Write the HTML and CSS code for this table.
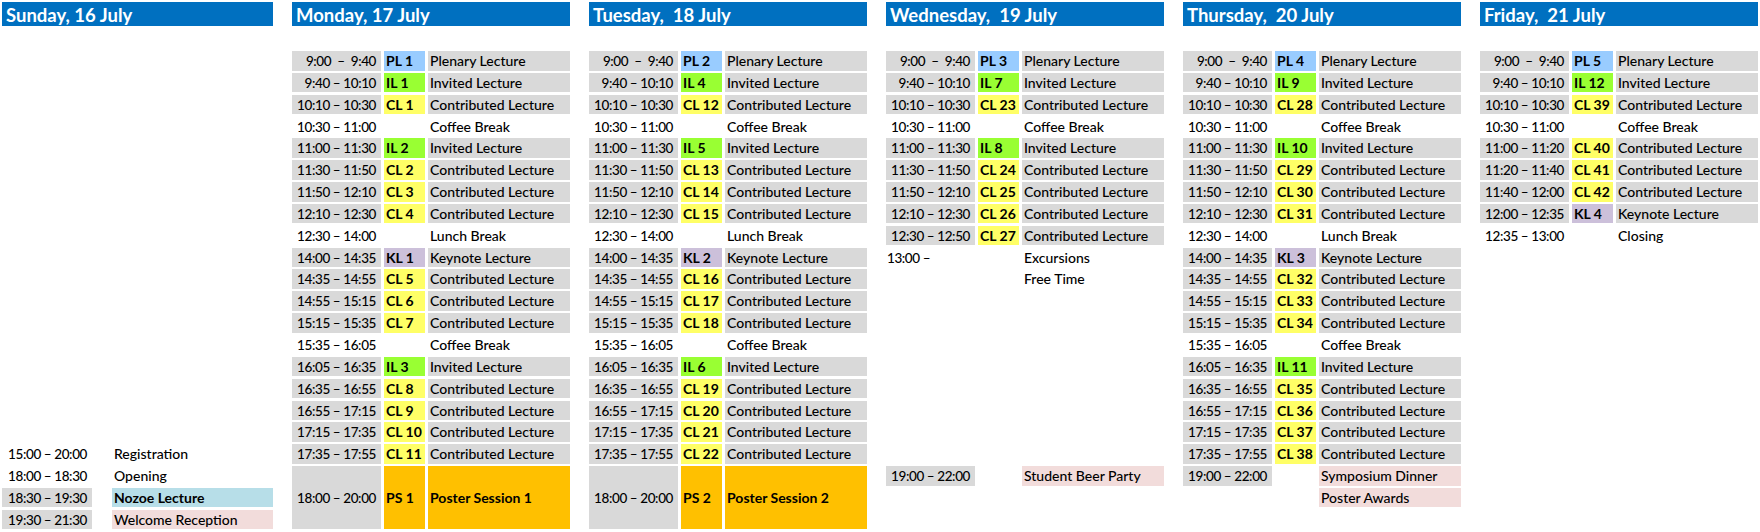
FILE: index.html
```html
<!DOCTYPE html>
<html>
<head>
<meta charset="utf-8">
<link rel="stylesheet" href="styles.css">
</head>
<body>
<div class="page">
  <section class="day sun">
    <h2 class="hd">Sunday, 16 July</h2>
    <div class="grid sgrid">
      <div class="t w r19">15:00 – 20:00</div><div class="c w r19"></div><div class="l w r19">Registration</div>
      <div class="t w r20">18:00 – 18:30</div><div class="c w r20"></div><div class="l w r20">Opening</div>
      <div class="t r21">18:30 – 19:30</div><div class="c w r21"></div><div class="l nz r21">Nozoe Lecture</div>
      <div class="t r22">19:30 – 21:30</div><div class="c w r22"></div><div class="l pink r22">Welcome Reception</div>
    </div>
  </section>

  <section class="day">
    <h2 class="hd">Monday, 17 July</h2>
    <div class="grid">
      <div class="t">9:00  –  9:40</div><div class="c pl">PL 1</div><div class="l">Plenary Lecture</div>
      <div class="t">9:40 – 10:10</div><div class="c il">IL 1</div><div class="l">Invited Lecture</div>
      <div class="t">10:10 – 10:30</div><div class="c cl">CL 1</div><div class="l">Contributed Lecture</div>
      <div class="t w">10:30 – 11:00</div><div class="c w"></div><div class="l w">Coffee Break</div>
      <div class="t">11:00 – 11:30</div><div class="c il">IL 2</div><div class="l">Invited Lecture</div>
      <div class="t">11:30 – 11:50</div><div class="c cl">CL 2</div><div class="l">Contributed Lecture</div>
      <div class="t">11:50 – 12:10</div><div class="c cl">CL 3</div><div class="l">Contributed Lecture</div>
      <div class="t">12:10 – 12:30</div><div class="c cl">CL 4</div><div class="l">Contributed Lecture</div>
      <div class="t w">12:30 – 14:00</div><div class="c w"></div><div class="l w">Lunch Break</div>
      <div class="t">14:00 – 14:35</div><div class="c kl">KL 1</div><div class="l">Keynote Lecture</div>
      <div class="t">14:35 – 14:55</div><div class="c cl">CL 5</div><div class="l">Contributed Lecture</div>
      <div class="t">14:55 – 15:15</div><div class="c cl">CL 6</div><div class="l">Contributed Lecture</div>
      <div class="t">15:15 – 15:35</div><div class="c cl">CL 7</div><div class="l">Contributed Lecture</div>
      <div class="t w">15:35 – 16:05</div><div class="c w"></div><div class="l w">Coffee Break</div>
      <div class="t">16:05 – 16:35</div><div class="c il">IL 3</div><div class="l">Invited Lecture</div>
      <div class="t">16:35 – 16:55</div><div class="c cl">CL 8</div><div class="l">Contributed Lecture</div>
      <div class="t">16:55 – 17:15</div><div class="c cl">CL 9</div><div class="l">Contributed Lecture</div>
      <div class="t">17:15 – 17:35</div><div class="c cl">CL 10</div><div class="l">Contributed Lecture</div>
      <div class="t">17:35 – 17:55</div><div class="c cl">CL 11</div><div class="l">Contributed Lecture</div>
      <div class="t big">18:00 – 20:00</div><div class="c ps big">PS 1</div><div class="l ps big">Poster Session 1</div>
    </div>
  </section>

  <section class="day">
    <h2 class="hd">Tuesday,  18 July</h2>
    <div class="grid">
      <div class="t">9:00  –  9:40</div><div class="c pl">PL 2</div><div class="l">Plenary Lecture</div>
      <div class="t">9:40 – 10:10</div><div class="c il">IL 4</div><div class="l">Invited Lecture</div>
      <div class="t">10:10 – 10:30</div><div class="c cl">CL 12</div><div class="l">Contributed Lecture</div>
      <div class="t w">10:30 – 11:00</div><div class="c w"></div><div class="l w">Coffee Break</div>
      <div class="t">11:00 – 11:30</div><div class="c il">IL 5</div><div class="l">Invited Lecture</div>
      <div class="t">11:30 – 11:50</div><div class="c cl">CL 13</div><div class="l">Contributed Lecture</div>
      <div class="t">11:50 – 12:10</div><div class="c cl">CL 14</div><div class="l">Contributed Lecture</div>
      <div class="t">12:10 – 12:30</div><div class="c cl">CL 15</div><div class="l">Contributed Lecture</div>
      <div class="t w">12:30 – 14:00</div><div class="c w"></div><div class="l w">Lunch Break</div>
      <div class="t">14:00 – 14:35</div><div class="c kl">KL 2</div><div class="l">Keynote Lecture</div>
      <div class="t">14:35 – 14:55</div><div class="c cl">CL 16</div><div class="l">Contributed Lecture</div>
      <div class="t">14:55 – 15:15</div><div class="c cl">CL 17</div><div class="l">Contributed Lecture</div>
      <div class="t">15:15 – 15:35</div><div class="c cl">CL 18</div><div class="l">Contributed Lecture</div>
      <div class="t w">15:35 – 16:05</div><div class="c w"></div><div class="l w">Coffee Break</div>
      <div class="t">16:05 – 16:35</div><div class="c il">IL 6</div><div class="l">Invited Lecture</div>
      <div class="t">16:35 – 16:55</div><div class="c cl">CL 19</div><div class="l">Contributed Lecture</div>
      <div class="t">16:55 – 17:15</div><div class="c cl">CL 20</div><div class="l">Contributed Lecture</div>
      <div class="t">17:15 – 17:35</div><div class="c cl">CL 21</div><div class="l">Contributed Lecture</div>
      <div class="t">17:35 – 17:55</div><div class="c cl">CL 22</div><div class="l">Contributed Lecture</div>
      <div class="t big">18:00 – 20:00</div><div class="c ps big">PS 2</div><div class="l ps big">Poster Session 2</div>
    </div>
  </section>

  <section class="day">
    <h2 class="hd">Wednesday,  19 July</h2>
    <div class="grid">
      <div class="t">9:00  –  9:40</div><div class="c pl">PL 3</div><div class="l">Plenary Lecture</div>
      <div class="t">9:40 – 10:10</div><div class="c il">IL 7</div><div class="l">Invited Lecture</div>
      <div class="t">10:10 – 10:30</div><div class="c cl">CL 23</div><div class="l">Contributed Lecture</div>
      <div class="t w">10:30 – 11:00</div><div class="c w"></div><div class="l w">Coffee Break</div>
      <div class="t">11:00 – 11:30</div><div class="c il">IL 8</div><div class="l">Invited Lecture</div>
      <div class="t">11:30 – 11:50</div><div class="c cl">CL 24</div><div class="l">Contributed Lecture</div>
      <div class="t">11:50 – 12:10</div><div class="c cl">CL 25</div><div class="l">Contributed Lecture</div>
      <div class="t">12:10 – 12:30</div><div class="c cl">CL 26</div><div class="l">Contributed Lecture</div>
      <div class="t">12:30 – 12:50</div><div class="c cl">CL 27</div><div class="l">Contributed Lecture</div>
      <div class="t w left">13:00 –</div><div class="c w"></div><div class="l w">Excursions</div>
      <div class="t w"></div><div class="c w"></div><div class="l w">Free Time</div>
      <div class="t r20">19:00 – 22:00</div><div class="c w r20"></div><div class="l pink r20">Student Beer Party</div>
    </div>
  </section>

  <section class="day">
    <h2 class="hd">Thursday,  20 July</h2>
    <div class="grid">
      <div class="t">9:00  –  9:40</div><div class="c pl">PL 4</div><div class="l">Plenary Lecture</div>
      <div class="t">9:40 – 10:10</div><div class="c il">IL 9</div><div class="l">Invited Lecture</div>
      <div class="t">10:10 – 10:30</div><div class="c cl">CL 28</div><div class="l">Contributed Lecture</div>
      <div class="t w">10:30 – 11:00</div><div class="c w"></div><div class="l w">Coffee Break</div>
      <div class="t">11:00 – 11:30</div><div class="c il">IL 10</div><div class="l">Invited Lecture</div>
      <div class="t">11:30 – 11:50</div><div class="c cl">CL 29</div><div class="l">Contributed Lecture</div>
      <div class="t">11:50 – 12:10</div><div class="c cl">CL 30</div><div class="l">Contributed Lecture</div>
      <div class="t">12:10 – 12:30</div><div class="c cl">CL 31</div><div class="l">Contributed Lecture</div>
      <div class="t w">12:30 – 14:00</div><div class="c w"></div><div class="l w">Lunch Break</div>
      <div class="t">14:00 – 14:35</div><div class="c kl">KL 3</div><div class="l">Keynote Lecture</div>
      <div class="t">14:35 – 14:55</div><div class="c cl">CL 32</div><div class="l">Contributed Lecture</div>
      <div class="t">14:55 – 15:15</div><div class="c cl">CL 33</div><div class="l">Contributed Lecture</div>
      <div class="t">15:15 – 15:35</div><div class="c cl">CL 34</div><div class="l">Contributed Lecture</div>
      <div class="t w">15:35 – 16:05</div><div class="c w"></div><div class="l w">Coffee Break</div>
      <div class="t">16:05 – 16:35</div><div class="c il">IL 11</div><div class="l">Invited Lecture</div>
      <div class="t">16:35 – 16:55</div><div class="c cl">CL 35</div><div class="l">Contributed Lecture</div>
      <div class="t">16:55 – 17:15</div><div class="c cl">CL 36</div><div class="l">Contributed Lecture</div>
      <div class="t">17:15 – 17:35</div><div class="c cl">CL 37</div><div class="l">Contributed Lecture</div>
      <div class="t">17:35 – 17:55</div><div class="c cl">CL 38</div><div class="l">Contributed Lecture</div>
      <div class="t">19:00 – 22:00</div><div class="c w"></div><div class="l pink">Symposium Dinner</div>
      <div class="t w"></div><div class="c w"></div><div class="l pink">Poster Awards</div>
    </div>
  </section>

  <section class="day">
    <h2 class="hd">Friday,  21 July</h2>
    <div class="grid">
      <div class="t">9:00  –  9:40</div><div class="c pl">PL 5</div><div class="l">Plenary Lecture</div>
      <div class="t">9:40 – 10:10</div><div class="c il">IL 12</div><div class="l">Invited Lecture</div>
      <div class="t">10:10 – 10:30</div><div class="c cl">CL 39</div><div class="l">Contributed Lecture</div>
      <div class="t w">10:30 – 11:00</div><div class="c w"></div><div class="l w">Coffee Break</div>
      <div class="t">11:00 – 11:20</div><div class="c cl">CL 40</div><div class="l">Contributed Lecture</div>
      <div class="t">11:20 – 11:40</div><div class="c cl">CL 41</div><div class="l">Contributed Lecture</div>
      <div class="t">11:40 – 12:00</div><div class="c cl">CL 42</div><div class="l">Contributed Lecture</div>
      <div class="t">12:00 – 12:35</div><div class="c kl">KL 4</div><div class="l">Keynote Lecture</div>
      <div class="t w">12:35 – 13:00</div><div class="c w"></div><div class="l w">Closing</div>
    </div>
  </section>
</div>
</body>
</html>
```

FILE: styles.css
```css
* { box-sizing: border-box; }
html, body { margin: 0; padding: 0; background: #fff; }
body {
  font-family: "Lato", "Liberation Sans", sans-serif;
  font-size: 14px;
  font-weight: 500;
  color: #000;
}
.page {
  display: flex;
  gap: 19px;
  padding: 2px 2px 0 2px;
}
.day {
  width: 278px;
  display: flex;
  flex-direction: column;
}
.day.sun { width: 271px; }
.hd {
  margin: 0;
  height: 24px;
  background: #0070c0;
  color: #fff;
  font-size: 18.5px;
  font-weight: 700;
  line-height: 26px;
  padding-left: 4px;
  white-space: pre;
}
.grid {
  margin-top: 25px;
  display: grid;
  grid-template-columns: 89px 41px 142px;
  grid-auto-rows: 19.5px;
  column-gap: 3px;
  row-gap: 2.35px;
}
.sgrid {
  grid-template-columns: 90px 14px 161px;
}
.t, .c, .l {
  line-height: 20px;
  white-space: pre;
}
.t {
  background: #d9d9d9;
  text-align: right;
  padding-right: 5px;
  font-size: 13.5px;
  letter-spacing: -0.4px;
}
.c {
  font-weight: 700;
  padding-left: 2px;
}
.l {
  background: #d9d9d9;
  padding-left: 2px;
}
.w { background: #fff; }
.left { text-align: left; padding-left: 1px; }
.pl { background: #99ccff; }
.il { background: #99ff33; }
.cl { background: #ffff66; }
.kl { background: #ccc0da; }
.ps { background: #ffc000; font-weight: 700; }
.nz { background: #b7dee8; font-weight: 700; }
.pink { background: #f2dcdb; }
.big {
  grid-row: span 3;
  display: flex;
  align-items: center;
  line-height: 20px;
}
.t.big { justify-content: flex-end; }
.r19 { grid-row: 19; }
.r20 { grid-row: 20; }
.r21 { grid-row: 21; }
.r22 { grid-row: 22; }
```
